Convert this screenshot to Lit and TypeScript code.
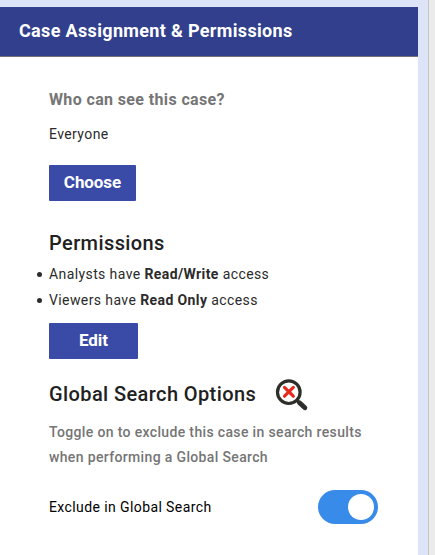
import { LitElement, html, css } from "lit";
import { customElement, state } from "lit/decorators.js";

@customElement("app-root")
export class AppRoot extends LitElement {
  static styles = css`
    :host {
      display: flex;
      box-sizing: border-box;
      width: 100%;
      height: 555px;
      overflow: hidden;
      background: #dee4f7;
      font-family: Roboto, "Liberation Sans", sans-serif;
      color: #2b2b2b;
      -webkit-font-smoothing: antialiased;
    }
    .card {
      flex: 1;
      margin: 7px 10px 0 0;
      background: #fff;
    }
    .rail {
      width: 6px;
      border-left: 1px solid #c3c3c5;
      background: #ebebeb;
    }
    .header {
      box-sizing: border-box;
      height: 50px;
      padding-left: 19px;
      border-bottom: 1px solid #77717a;
      background: #313f8c;
      color: #fff;
      font-size: 18px;
      font-weight: 700;
      line-height: 48px;
      letter-spacing: 0.34px;
    }
    .body {
      padding: 31px 40px 0 49px;
    }
    h2, h3, p, ul { margin: 0; padding: 0; }
    .question {
      color: #757575;
      font-size: 16px;
      font-weight: 700;
      line-height: 24px;
      letter-spacing: 0.37px;
    }
    .value {
      margin-top: 12px;
      font-size: 14px;
      line-height: 20px;
      letter-spacing: 0.4px;
    }
    .button {
      display: block;
      margin: 0;
      padding: 0 0 3px;
      height: 36px;
      border: 0;
      border-radius: 1px;
      background: #394ba6;
      color: #fff;
      font: 700 17px Roboto, "Liberation Sans", sans-serif;
      letter-spacing: -0.08px;
    }
    .choose { width: 87px; margin-top: 21px; }
    .edit { width: 89px; margin-top: 10px; }
    .title {
      color: #212121;
      font-size: 20px;
      font-weight: 500;
      line-height: 28px;
      letter-spacing: 0.4px;
      white-space: nowrap;
    }
    .permissions { margin-top: 28px; }
    .rules {
      margin-top: 4px;
      list-style: none;
      font-size: 14px;
      line-height: 26px;
      letter-spacing: 0.4px;
    }
    .rules li {
      display: flex;
      align-items: center;
      margin-left: -12px;
      white-space: pre;
    }
    .rules li::before {
      content: "";
      width: 5px;
      height: 5px;
      margin: 1px 7px 0 0;
      border-radius: 50%;
      background: #2b2b2b;
    }
    .search-title {
      display: flex;
      align-items: center;
      gap: 19px;
      height: 34px;
      margin-top: 18px;
    }
    .search-icon { display: block; width: 34px; height: 34px; margin-top: 2px; }
    .hint {
      margin-top: 9px;
      color: #757575;
      font-size: 14px;
      font-weight: 500;
      line-height: 25px;
      letter-spacing: 0.35px;
      white-space: nowrap;
    }
    .toggle-row {
      display: flex;
      align-items: center;
      justify-content: space-between;
      margin-top: 20px;
      color: #000;
      font-size: 14px;
      letter-spacing: 0.4px;
    }
    .switch {
      box-sizing: border-box;
      display: flex;
      align-items: center;
      width: 60px;
      height: 34px;
      margin: 0;
      padding: 4px;
      border: 0;
      border-radius: 17px;
      background: #9e9e9e;
    }
    .switch.on { justify-content: flex-end; background: #398bea; }
    .knob { width: 26px; height: 26px; border-radius: 50%; background: #fff; }
  `;

  @state() private excluded = true;

  private toggle() {
    this.excluded = !this.excluded;
  }

  render() {
    return html`
      <section class="card">
        <h2 class="header">Case Assignment &amp; Permissions</h2>
        <div class="body">
          <h3 class="question">Who can see this case?</h3>
          <p class="value">Everyone</p>
          <button class="button choose">Choose</button>
          <h3 class="title permissions">Permissions</h3>
          <ul class="rules">
            <li><span>Analysts have <b>Read/Write</b> access</span></li>
            <li><span>Viewers have <b>Read Only</b> access</span></li>
          </ul>
          <button class="button edit">Edit</button>
          <div class="search-title">
            <h3 class="title">Global Search Options</h3>
            <svg class="search-icon" viewBox="0 0 34 34" fill="none" stroke-linecap="round">
              <circle cx="13.8" cy="14.2" r="11.3" stroke="#2e2e2a" stroke-width="3.2" />
              <path d="M22.5 23l2 2" stroke="#2e2e2a" stroke-width="3" />
              <path d="M24.5 24.8l5.4 5" stroke="#2e2e2a" stroke-width="4.8" />
              <path d="M9.5 9.4l8.8 8.8M18.3 9.4l-8.8 8.8" stroke="#e52b1e" stroke-width="3.2" />
            </svg>
          </div>
          <p class="hint">Toggle on to exclude this case in search results<br />when performing a Global Search</p>
          <div class="toggle-row">
            <span>Exclude in Global Search</span>
            <button
              class="switch ${this.excluded ? "on" : ""}"
              role="switch"
              aria-checked=${this.excluded ? "true" : "false"}
              aria-label="Exclude in Global Search"
              @click=${this.toggle}
            ><span class="knob"></span></button>
          </div>
        </div>
      </section>
      <aside class="rail"></aside>
    `;
  }
}
